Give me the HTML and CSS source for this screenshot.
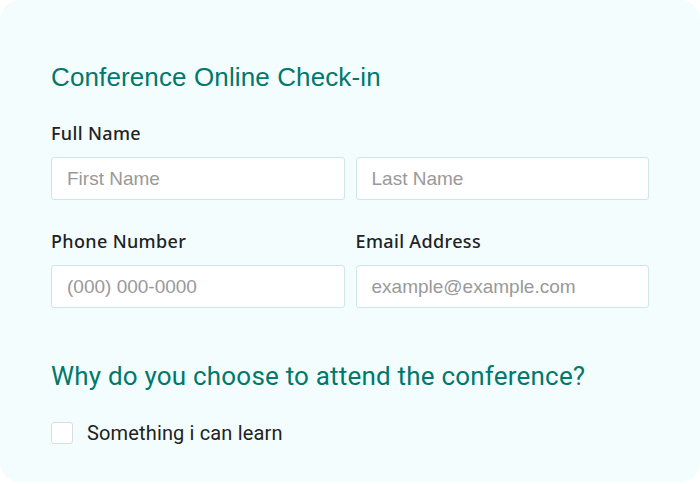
FILE: index.html
```html
<!DOCTYPE html>
<html lang="en">
<head>
<meta charset="utf-8">
<title>Conference Online Check-in</title>
<link rel="stylesheet" href="styles.css">
</head>
<body>
<form class="card">
  <h1 class="title">Conference Online Check-in</h1>
  <div class="group">
    <label class="label">Full Name</label>
    <div class="pair">
      <input class="input" type="text" placeholder="First Name">
      <input class="input" type="text" placeholder="Last Name">
    </div>
  </div>
  <div class="pair row2">
    <div class="field">
      <label class="label">Phone Number</label>
      <input class="input" type="text" placeholder="(000) 000-0000">
    </div>
    <div class="field">
      <label class="label">Email Address</label>
      <input class="input" type="text" placeholder="example@example.com">
    </div>
  </div>
  <h2 class="question">Why do you choose to attend the conference?</h2>
  <label class="check">
    <span class="box"></span>
    <span class="check-text">Something i can learn</span>
  </label>
</form>
</body>
</html>
```
FILE: styles.css
```css
html, body {
  margin: 0;
  padding: 0;
  background: #ffffff;
}
body {
  font-family: "Liberation Sans", Arial, sans-serif;
}
.card {
  box-sizing: border-box;
  width: 700px;
  height: 482px;
  background: #f3fdfe;
  border-radius: 20px;
  padding: 62px 51px 0 51px;
  display: flex;
  flex-direction: column;
}
.title {
  margin: 0;
  font-family: "Liberation Sans", Arial, sans-serif;
  font-size: 26px;
  letter-spacing: 0.12px;
  line-height: 30px;
  font-weight: 400;
  color: #00796b;
}
.group {
  margin-top: 31px;
  display: flex;
  flex-direction: column;
}
.label {
  display: block;
  font-family: "Noto Sans", "Liberation Sans", sans-serif;
  font-size: 18px;
  letter-spacing: 0.35px;
  line-height: 20px;
  color: #222222;
  font-weight: 500;
  margin-bottom: 14px;
}
.pair {
  display: grid;
  grid-template-columns: 1fr 1fr;
  column-gap: 11px;
}
.row2 {
  margin-top: 31px;
}
.field {
  display: flex;
  flex-direction: column;
}
.input {
  box-sizing: border-box;
  width: 100%;
  height: 43px;
  margin: 0;
  background: #ffffff;
  border: 1px solid #cce8e6;
  border-radius: 3px;
  padding: 0 15px;
  font-family: "Liberation Sans", Arial, sans-serif;
  font-size: 19px;
  color: #333333;
  outline: none;
}
.input::placeholder {
  color: #999999;
}
.question {
  margin: 53px 0 0 0;
  font-family: Roboto, "Liberation Sans", sans-serif;
  font-size: 26px;
  letter-spacing: 0.2px;
  line-height: 30px;
  font-weight: 400;
  color: #00796b;
}
.check {
  margin-top: 31px;
  display: flex;
  align-items: center;
  gap: 14px;
}
.box {
  box-sizing: border-box;
  width: 22px;
  height: 22px;
  background: #ffffff;
  border: 1px solid #dddddd;
  border-radius: 3px;
}
.check-text {
  font-family: Roboto, "Liberation Sans", sans-serif;
  font-size: 20px;
  letter-spacing: 0.15px;
  line-height: 22px;
  color: #222222;
}
```
